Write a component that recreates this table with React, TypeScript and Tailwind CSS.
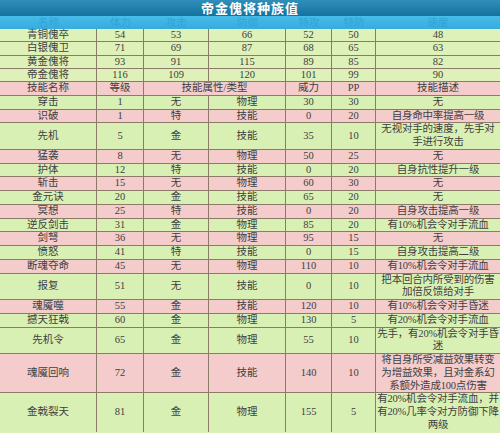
const grid = "grid grid-cols-[97px_47px_65px_77px_46px_44px_124px]";
const cell = "flex items-center justify-center text-center border-r border-[#8c7b69] last:border-r-0 whitespace-pre-line";

const stats = [
  ["青铜傀卒", "54", "53", "66", "52", "50", "48"],
  ["白银傀卫", "71", "69", "87", "68", "65", "63"],
  ["黄金傀将", "93", "91", "115", "89", "85", "82"],
  ["帝金傀将", "116", "109", "120", "101", "99", "90"],
];

type Skill = { name: string; lv: string; attr: string; kind: string; pow: string; pp: string; desc: string; pink: boolean };

const skills: Skill[] = [
  { name: "穿击", lv: "1", attr: "无", kind: "物理", pow: "30", pp: "30", desc: "无", pink: false },
  { name: "识破", lv: "1", attr: "特", kind: "技能", pow: "0", pp: "20", desc: "自身命中率提高一级", pink: true },
  { name: "先机", lv: "5", attr: "金", kind: "技能", pow: "35", pp: "10", desc: "无视对手的速度，先手对\n手进行攻击", pink: false },
  { name: "猛袭", lv: "8", attr: "无", kind: "物理", pow: "50", pp: "25", desc: "无", pink: true },
  { name: "护体", lv: "12", attr: "特", kind: "技能", pow: "0", pp: "20", desc: "自身抗性提升一级", pink: false },
  { name: "斩击", lv: "15", attr: "无", kind: "物理", pow: "60", pp: "30", desc: "无", pink: true },
  { name: "金元诀", lv: "20", attr: "金", kind: "技能", pow: "65", pp: "20", desc: "无", pink: false },
  { name: "冥想", lv: "25", attr: "特", kind: "技能", pow: "0", pp: "20", desc: "自身攻击提高一级", pink: true },
  { name: "逆反剑击", lv: "31", attr: "金", kind: "物理", pow: "85", pp: "20", desc: "有10%机会令对手流血", pink: false },
  { name: "剑弩", lv: "36", attr: "无", kind: "物理", pow: "95", pp: "15", desc: "无", pink: true },
  { name: "愤怒", lv: "41", attr: "特", kind: "技能", pow: "0", pp: "15", desc: "自身攻击提高二级", pink: false },
  { name: "断魂夺命", lv: "45", attr: "无", kind: "物理", pow: "110", pp: "10", desc: "有10%机会令对手流血", pink: true },
  { name: "报复", lv: "51", attr: "无", kind: "技能", pow: "0", pp: "10", desc: "把本回合内所受到的伤害\n加倍反馈给对手", pink: false },
  { name: "魂魇噬", lv: "55", attr: "金", kind: "技能", pow: "120", pp: "10", desc: "有10%机会令对手昏迷", pink: true },
  { name: "撼天狂戟", lv: "60", attr: "金", kind: "物理", pow: "130", pp: "5", desc: "有20%机会令对手流血", pink: false },
  { name: "先机令", lv: "65", attr: "金", kind: "物理", pow: "55", pp: "10", desc: "先手，有20%机会令对手昏\n迷", pink: false },
  { name: "魂魇回响", lv: "72", attr: "金", kind: "技能", pow: "140", pp: "10", desc: "将自身所受减益效果转变\n为增益效果，且对金系幻\n系额外造成100点伤害", pink: true },
  { name: "金戟裂天", lv: "81", attr: "金", kind: "物理", pow: "155", pp: "5", desc: "有20%机会令对手流血，并\n有20%几率令对方防御下降\n两级", pink: false },
];

export default function App() {
  return (
    <div className="w-[500px] h-[433px] overflow-hidden bg-[#dcf0b6] text-[10.5px] text-[#404040] font-['Liberation_Serif','Noto_Sans_CJK_SC',serif]">
      {/* title */}
      <div className="h-[16px] flex items-center justify-center bg-gradient-to-b from-[#2f8fba] to-[#15719d] text-white font-bold text-[13px] leading-none tracking-[1px]">
        帝金傀将种族值
      </div>
      {/* stat header */}
      <div className={`${grid} h-[13px] bg-gradient-to-b from-[#47bce8] to-[#36abde] text-[#32a4d6] leading-[13px]`}>
        {["名称", "体力", "攻击", "防御", "特攻", "特防", "速度"].map((h) => (
          <div key={h} className="text-center">{h}</div>
        ))}
      </div>
      {/* stat rows */}
      {stats.map((row) => (
        <div key={row[0]} className={`${grid} bg-[#def1b8] border-b border-[#8c7b69] leading-[12.25px]`}>
          {row.map((v, i) => (
            <div key={i} className={cell}>{v}</div>
          ))}
        </div>
      ))}
      {/* skill header */}
      <div className="grid grid-cols-[97px_47px_142px_46px_44px_124px] bg-[#f3cccb] border-b border-[#8c7b69] leading-[12.75px]">
        {["技能名称", "等级", "技能属性/类型", "威力", "PP", "技能描述"].map((h) => (
          <div key={h} className={cell}>{h}</div>
        ))}
      </div>
      {skills.map((s) => (
        <div
          key={s.name}
          className={`${grid} ${s.pink ? "bg-[#f3cccb]" : "bg-[#d9f0b5]"} border-b border-[#8c7b69] last:border-b-0 leading-[12.75px]`}
        >
          <div className={cell}>{s.name}</div>
          <div className={cell}>{s.lv}</div>
          <div className={cell}>{s.attr}</div>
          <div className={cell}>{s.kind}</div>
          <div className={cell}>{s.pow}</div>
          <div className={cell}>{s.pp}</div>
          <div className={`${cell} whitespace-pre tracking-[-0.2px]`}>{s.desc}</div>
        </div>
      ))}
    </div>
  );
}
